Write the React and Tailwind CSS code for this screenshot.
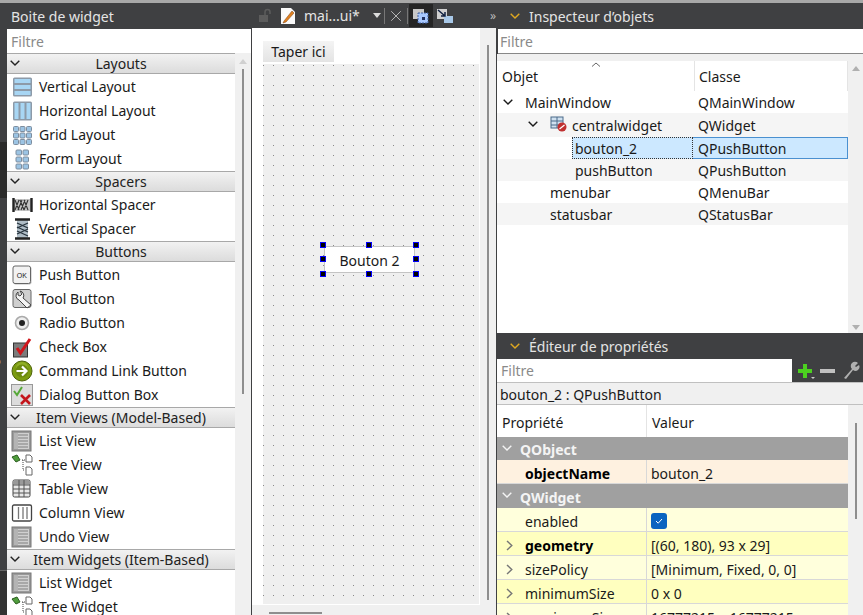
import { X } from 'lucide-react';

const Chevron = ({ className = 'text-[#2a2a2a]' }) => (
  <svg width="10" height="6" viewBox="0 0 10 6" className={className}>
    <path d="M0.7 0.7 L5 5 L9.3 0.7" fill="none" stroke="currentColor" strokeWidth="1.4" />
  </svg>
);

const ChevronSide = ({ className = '' }) => (
  <svg width="7" height="11" viewBox="0 0 7 11" className={className}>
    <path d="M1 1 L5.8 5.5 L1 10" fill="none" stroke="#777" strokeWidth="1.4" />
  </svg>
);

// small hand-drawn widget box icons
const Icon = ({ children }) => (
  <svg width="22" height="22" viewBox="0 0 22 22" className="shrink-0">{children}</svg>
);

const VLayout = () => (
  <Icon>
    <rect x="2" y="1.5" width="19" height="19" rx="1.5" fill="#8d9aa8" />
    {[3, 9, 15].map((y) => (
      <rect key={y} x="3.5" y={y} width="16" height="4" fill="#a8d6f4" />
    ))}
  </Icon>
);
const HLayout = () => (
  <Icon>
    <rect x="2" y="1.5" width="19" height="19" rx="1.5" fill="#8d9aa8" />
    {[3.5, 9.5, 15.5].map((x) => (
      <rect key={x} x={x} y="3" width="4" height="16" fill="#a8d6f4" />
    ))}
  </Icon>
);
const GridLayout = () => (
  <Icon>
    {[2.5, 9, 15.5].map((y) =>
      [2.5, 9, 15.5].map((x) => (
        <rect key={`${x}-${y}`} x={x} y={y} width="5" height="5" rx="1" fill="#9cc4e4" stroke="#7d8d9e" />
      ))
    )}
  </Icon>
);
const FormLayout = () => (
  <Icon>
    {[2, 9, 16].map((y) =>
      [5, 12].map((x) => (
        <rect key={`${x}-${y}`} x={x} y={y} width="5.5" height="5" rx="1" fill="#9cc4e4" stroke="#7d8d9e" />
      ))
    )}
  </Icon>
);
const HSpacer = () => (
  <Icon>
    <rect x="2" y="5" width="19" height="12" fill="#c4c4c4" />
    <path d="M4 16 L8 6 M7 16 L11 6 M10 16 L14 6 M13 16 L17 6 M4 6 L8 16 M9 6 L13 16 M13 6 L17 16" stroke="#333" strokeWidth="1.1" />
    <path d="M2.5 4 V18 M20.5 4 V18" stroke="#222" strokeWidth="2.4" />
  </Icon>
);
const VSpacer = () => (
  <Icon>
    <rect x="6" y="1" width="11" height="20" fill="#aebcc6" />
    <path d="M6 5 L17 10 M6 9 L17 14 M6 13 L17 18 M17 5 L6 10 M17 11 L6 16" stroke="#26323c" strokeWidth="1.3" />
    <path d="M4 1.5 H19 M4 20.5 H19" stroke="#222" strokeWidth="2.4" />
  </Icon>
);
const PushBtn = () => (
  <Icon>
    <rect x="2.5" y="2.5" width="18" height="18" rx="2" fill="#777" opacity="0.5" />
    <rect x="2" y="2" width="17.5" height="17.5" rx="2" fill="#f2f2f2" stroke="#666" />
    <text x="10.8" y="13.5" textAnchor="middle" fontSize="7" fontFamily="Liberation Sans" fill="#222">OK</text>
  </Icon>
);
const ToolBtn = () => (
  <Icon>
    <rect x="2" y="1.5" width="18" height="18" rx="2" fill="#cfcfcf" stroke="#666" />
    <path d="M7 4 a4.5 4.5 0 0 0 1 8 l8 8 l4 -3 l-8 -7 a4.5 4.5 0 0 0 -3 -7 l2 3 l-2 2 l-2 -1 z" fill="#f4f4f4" stroke="#444" />
  </Icon>
);
const RadioBtn = () => (
  <Icon>
    <circle cx="11" cy="11" r="6.5" fill="#eee" stroke="#aaa" strokeWidth="1.6" />
    <circle cx="11" cy="11" r="3" fill="#222" />
  </Icon>
);
const CheckBtn = () => (
  <Icon>
    <rect x="2.5" y="7" width="14" height="14" fill="#7c7c7c" stroke="#333" />
    <path d="M6 12 L9.5 17 L19 3" fill="none" stroke="#d0161c" strokeWidth="3" />
  </Icon>
);
const LinkBtn = () => (
  <Icon>
    <circle cx="11" cy="11" r="10" fill="#7c9c12" stroke="#4e6408" />
    <circle cx="11" cy="8" r="6" fill="#a6c23a" opacity="0.5" />
    <circle cx="11" cy="11" r="6.5" fill="#6d8a10" />
    <path d="M5.5 11 H15 M11 6.5 L15.5 11 L11 15.5" fill="none" stroke="#fff" strokeWidth="2.2" />
  </Icon>
);
const DialogBtn = () => (
  <Icon>
    <rect x="0.5" y="0.5" width="21" height="21" fill="#dcdcdc" stroke="#999" />
    <path d="M3 7 L6 11 L11 3" fill="none" stroke="#55a838" strokeWidth="2" />
    <path d="M10 11 L19 20 M19 11 L10 20" stroke="#c4161c" strokeWidth="2.6" />
  </Icon>
);
const ListIcon = () => (
  <Icon>
    <rect x="1" y="1" width="19" height="20" fill="#9a9a9a" stroke="#777" />
    <rect x="3" y="3" width="4" height="16" fill="#b4b4b4" />
    <rect x="7" y="3" width="11" height="16" fill="#d0d0d0" />
    {[5, 8, 11, 14, 17].map((y) => (
      <path key={y} d={`M7 ${y} H17`} stroke="#808080" />
    ))}
  </Icon>
);
const TreeIcon = () => (
  <Icon>
    <path d="M1 3 L6 1 L9 6 L5 8 Z" fill="#4f9d3c" stroke="#2c5e20" />
    <path d="M11 6 H14 M12 6 V16 H14" fill="none" stroke="#444" strokeDasharray="1 1" />
    <path d="M15 1 H19 L21 3 V8 H15 Z M15 13 H19 L21 15 V21 H15 Z" fill="#fff" stroke="#666" />
  </Icon>
);
const TableIcon = () => (
  <Icon>
    <rect x="2" y="2" width="17" height="17" rx="1.5" fill="#e8e8e8" stroke="#444" />
    <rect x="2.5" y="2.5" width="16" height="4" fill="#9a9a9a" />
    <path d="M2 7 H19 M2 11 H19 M2 15 H19 M8 2 V19 M13 2 V19" stroke="#555" />
  </Icon>
);
const ColumnIcon = () => (
  <Icon>
    <rect x="1.5" y="3" width="19" height="16" rx="1.5" fill="#fff" stroke="#444" strokeWidth="1.3" />
    <path d="M7.5 5 V17 M12 5 V17 M16 5 V17" stroke="#777" strokeWidth="1.3" />
  </Icon>
);

const sections = [
  { title: 'Layouts', items: [['Vertical Layout', VLayout], ['Horizontal Layout', HLayout], ['Grid Layout', GridLayout], ['Form Layout', FormLayout]] },
  { title: 'Spacers', items: [['Horizontal Spacer', HSpacer], ['Vertical Spacer', VSpacer]] },
  { title: 'Buttons', items: [['Push Button', PushBtn], ['Tool Button', ToolBtn], ['Radio Button', RadioBtn], ['Check Box', CheckBtn], ['Command Link Button', LinkBtn], ['Dialog Button Box', DialogBtn]] },
  { title: 'Item Views (Model-Based)', items: [['List View', ListIcon], ['Tree View', TreeIcon], ['Table View', TableIcon], ['Column View', ColumnIcon], ['Undo View', ListIcon]] },
  { title: 'Item Widgets (Item-Based)', items: [['List Widget', ListIcon], ['Tree Widget', TreeIcon]] },
];

const DockTitle = ({ title, height = 'h-[26px]' }) => (
  <div className={`flex ${height} shrink-0 items-center gap-[9px] pl-[13px] text-[#e4e4e4]`}>
    <Chevron className="text-[#e0a820]" />
    <span>{title}</span>
  </div>
);

const Scrollbar = () => (
  <div className="flex w-[16px] shrink-0 flex-col items-center bg-[#f0f0f0] pt-[6px]">
    <div className="h-0 w-0 border-x-[4px] border-b-[5px] border-x-transparent border-b-[#d0d0d0]" />
    <div className="mt-[5px] h-[325px] w-[2px] bg-[#8e8e8e]" />
  </div>
);

const LeftStrip = () => (
  <div className="flex w-[7px] shrink-0 flex-col overflow-hidden">
    <div className="h-[139px] shrink-0" />
    <div className="h-[56px] shrink-0 bg-[#2b2b2b]" />
    <div className="h-[154px] shrink-0" />
    <div className="-ml-[6px] h-[20px] shrink-0 text-[12px] text-[#b8b8b8]">6</div>
    <div className="h-[198px] shrink-0" />
    <div className="min-h-0 flex-1 border-t border-[#666] bg-[#333]" />
  </div>
);

const WidgetBox = () => (
  <div className="flex w-[252px] shrink-0">
    <LeftStrip />
    <div className="mr-px flex min-w-0 flex-1 flex-col">
      <div className="flex h-[26px] shrink-0 items-center pl-[4px] text-[#e4e4e4]">Boite de widget</div>
      <div className="flex h-[24px] shrink-0 items-center bg-white pl-[4px] text-[#8a8a8a]">Filtre</div>
      <div className="flex min-h-0 flex-1 bg-white">
        <div className="min-w-0 flex-1 overflow-hidden">
          {sections.map((s) => (
            <div key={s.title}>
              <div className="relative mb-px flex h-[21px] items-center justify-center border-y border-[#a8a8a8] bg-gradient-to-b from-[#f2f2f2] to-[#dcdcdc] text-[#222]">
                <Chevron className="absolute left-[3px] top-[6px]" />
                {s.title}
              </div>
              {s.items.map(([label, Ic]) => (
                <div key={label} className="flex h-[24px] items-center gap-[6px] pl-[4px] text-[#1a1a1a]">
                  <Ic />
                  <span className="pb-[2px]">{label}</span>
                </div>
              ))}
            </div>
          ))}
        </div>
        <Scrollbar />
      </div>
    </div>
  </div>
);

const Handle = ({ className }) => (
  <div className={`absolute h-[6px] w-[6px] border border-[#0000ff] bg-black ${className}`} />
);

const FormArea = () => (
  <div className="flex w-[245px] shrink-0 flex-col">
    <div className="flex h-[25px] shrink-0 items-center text-[#e4e4e4]">
      <svg width="16" height="16" viewBox="0 0 16 16" className="ml-[6px]">
        <rect x="1" y="7" width="9" height="7" fill="#5c5c5c" />
        <path d="M7 7 V4 a2.5 2.5 0 0 1 5 0 V6" fill="none" stroke="#5c5c5c" strokeWidth="1.5" />
      </svg>
      <svg width="18" height="20" viewBox="0 0 18 20" className="ml-[5px]">
        <path d="M2 2 H12 L16 6 V18 H2 Z" fill="#fafafa" />
        <path d="M5 15 L13 5 L15 7 L7 16 L4 17 Z" fill="#e08020" stroke="#7a4010" strokeWidth="0.5" />
      </svg>
      <span className="ml-[7px] w-[65px] whitespace-nowrap">mai...ui*</span>
      <div className="ml-[4px] h-0 w-0 border-x-[4px] border-t-[5px] border-x-transparent border-t-[#ddd]" />
      <div className="ml-[3px] h-[16px] w-px bg-[#777]" />
      <X size={18} strokeWidth={1.1} className="ml-[2px] text-[#cfcfcf]" />
      <div className="ml-[2px] h-[16px] w-px bg-[#777]" />
      <div className="ml-px flex h-[23px] w-[24px] items-center justify-center bg-[#252525]">
        <svg width="18" height="16" viewBox="0 0 18 16">
          <rect x="1" y="1" width="11" height="10" fill="#c8c8c8" />
          <rect x="6" y="5" width="10" height="10" fill="#a8c8ff" stroke="#4060a0" strokeDasharray="2 1" />
          <rect x="10" y="9" width="3" height="3" fill="#203060" />
        </svg>
      </div>
      <svg width="18" height="16" viewBox="0 0 18 16" className="ml-[3px]">
        <rect x="1" y="1" width="10" height="10" fill="#d0d0d0" />
        <rect x="8" y="8" width="9" height="7" fill="#a8c8e8" />
        <path d="M2 2 L9 8 M9 4 V8 H5" fill="none" stroke="#102040" strokeWidth="1.5" />
      </svg>
      <span className="ml-auto mr-[1px] text-[12px] text-[#bbb]">»</span>
    </div>
    <div className="mr-px flex min-h-0 flex-1">
      <div className="flex min-w-0 flex-1 flex-col bg-[#f0f0f0]">
        <div className="h-[577px] shrink-0 bg-white pl-[11px] pr-px">
          <div className="h-[13px]" />
          <div className="flex h-[21px] w-[71px] items-center justify-center bg-gradient-to-b from-[#f4f4f4] to-[#e4e4e4] text-[#1a1a1a]">
            Taper ici
          </div>
          <div className="relative mt-[2px] h-[540px] bg-[#efefef] bg-[radial-gradient(circle_at_0.5px_0.5px,#8a8a8a_0.6px,transparent_0.7px)] bg-[length:10px_10px] bg-[position:0_1px]">
            <button className="absolute left-[61px] top-[182px] h-[27px] w-[91px] border border-[#c4c4c4] bg-white pt-px text-[#1a1a1a]">
              Bouton 2
            </button>
            <Handle className="left-[57px] top-[178px]" />
            <Handle className="left-[103px] top-[178px]" />
            <Handle className="left-[150px] top-[178px]" />
            <Handle className="left-[57px] top-[192px]" />
            <Handle className="left-[150px] top-[192px]" />
            <Handle className="left-[57px] top-[207px]" />
            <Handle className="left-[103px] top-[207px]" />
            <Handle className="left-[150px] top-[207px]" />
          </div>
        </div>
        <div className="ml-[17px] mt-[7px] h-[2px] w-[53px] bg-[#8e8e8e]" />
      </div>
      <div className="flex w-[16px] shrink-0 flex-col items-center bg-[#f0f0f0] pt-[17px]">
        <div className="h-[555px] w-[2px] bg-[#8e8e8e]" />
      </div>
    </div>
  </div>
);

const treeRows = [
  { name: 'MainWindow', cls: 'QMainWindow', pad: 28, chev: 'left-[6px]' },
  { name: 'centralwidget', cls: 'QWidget', pad: 75, chev: 'left-[31px]', alt: true, icon: true, tall: true },
  { name: 'bouton_2', cls: 'QPushButton', pad: 78, selected: true },
  { name: 'pushButton', cls: 'QPushButton', pad: 78, alt: true },
  { name: 'menubar', cls: 'QMenuBar', pad: 53 },
  { name: 'statusbar', cls: 'QStatusBar', pad: 53, alt: true },
];

const ObjectInspector = () => (
  <div className="flex h-[330px] shrink-0 flex-col">
    <DockTitle title="Inspecteur d’objets" />
    <div className="ml-px flex h-[25px] shrink-0 items-center border-b border-[#888] bg-white pl-[2px] text-[#8a8a8a]">Filtre</div>
    <div className="flex min-h-0 flex-1 bg-[#f0f0f0]">
      <div className="mt-[7px] min-w-0 flex-1 bg-white">
        <div className="relative flex h-[30px] text-[#1a1a1a]">
          <svg width="10" height="5" viewBox="0 0 10 5" className="absolute left-[94px] top-[1px]">
            <path d="M1 4.5 L5 1 L9 4.5" fill="none" stroke="#666" />
          </svg>
          <div className="flex w-[198px] items-end border-r border-[#e4e4e4] pl-[5px] pb-[4px]">Objet</div>
          <div className="flex flex-1 items-end border-r border-[#e4e4e4] pl-[4px] pb-[4px]">Classe</div>
        </div>
        {treeRows.map((r) => (
          <div
            key={r.name}
            className={`relative flex items-center text-[#1a1a1a] ${r.tall ? 'h-[24px]' : 'h-[22px]'} ${r.alt ? 'bg-[#f5f5f5]' : ''}`}
          >
            {r.chev && <Chevron className={`absolute top-[8px] ${r.chev}`} />}
            {r.icon && (
              <svg width="18" height="17" viewBox="0 0 18 17" className="absolute left-[53px] top-[3px]">
                <rect x="1" y="1" width="12" height="11" fill="#cfe0ef" stroke="#4a6a8a" />
                <path d="M1 5 H13 M1 9 H13 M7 1 V12" stroke="#4a6a8a" />
                <circle cx="12" cy="11" r="4.5" fill="#c03030" />
                <path d="M9.5 13 L14.5 9" stroke="#fff" strokeWidth="1.2" />
              </svg>
            )}
            <div className="flex h-full w-[196px] items-center" style={{ paddingLeft: r.selected ? 75 : r.pad }}>
              {r.selected ? (
                <div className="flex h-full flex-1 items-center border border-dotted border-[#333] bg-[#cce8ff] pl-[2px]">{r.name}</div>
              ) : (
                r.name
              )}
            </div>
            <div className={`flex h-full flex-1 items-center pl-[5px] ${r.selected ? 'border-y border-r border-[#4a90d0] bg-[#cce8ff]' : ''}`}>{r.cls}</div>
          </div>
        ))}
      </div>
      <div className="flex w-[15px] shrink-0 flex-col items-center justify-between pt-[12px] pb-[3px]">
        <div className="h-0 w-0 border-x-[4px] border-b-[5px] border-x-transparent border-b-[#b0b0b0]" />
        <div className="h-0 w-0 border-x-[4px] border-t-[5px] border-x-transparent border-t-[#b0b0b0]" />
      </div>
    </div>
  </div>
);

const propRows = [
  { section: 'QObject', h: 'h-[23px]' },
  { name: 'objectName', value: 'bouton_2', bold: true, bg: 'bg-[#fef1e0]' },
  { section: 'QWidget', h: 'h-[24px]' },
  { name: 'enabled', check: true, bg: 'bg-[#ffffdc]' },
  { name: 'geometry', value: '[(60, 180), 93 x 29]', bold: true, arrow: true, bg: 'bg-[#ffffbf]' },
  { name: 'sizePolicy', value: '[Minimum, Fixed, 0, 0]', arrow: true, bg: 'bg-[#ffffdc]' },
  { name: 'minimumSize', value: '0 x 0', arrow: true, bg: 'bg-[#ffffbf]' },
  { name: 'maximumSize', value: '16777215 x 16777215', arrow: true, bg: 'bg-[#ffffdc]' },
];

const PropertyEditor = () => (
  <div className="flex min-h-0 flex-1 flex-col">
    <DockTitle title="Éditeur de propriétés" />
    <div className="flex h-[23px] shrink-0 items-center">
      <div className="flex h-full w-[295px] items-center bg-white pl-[4px] text-[#8a8a8a]">Filtre</div>
      <svg width="20" height="20" viewBox="0 0 20 20" className="ml-[4px]">
        <path d="M7 3 H11 V8 H16 V12 H11 V17 H7 V12 H2 V8 H7 Z" fill="#4cd020" />
        <path d="M15 16 H19 L17 18 Z" fill="#ccc" />
      </svg>
      <div className="ml-[4px] h-[4px] w-[15px] bg-[#c0c0c0]" />
      <svg width="19" height="19" viewBox="0 0 19 19" className="ml-[7px]">
        <path d="M2 17 L10 8 a4 4 0 0 1 6 -6 l-3 3 l1 1 l3 -2 a4 4 0 0 1 -6 5 L4 18 Z" fill="#b0b0b0" />
      </svg>
    </div>
    <div className="flex h-[23px] shrink-0 items-center border-y border-[#c0c0c0] bg-[#f0f0f0] pl-[3px] pt-[2px] text-[#1a1a1a]">bouton_2 : QPushButton</div>
    <div className="flex min-h-0 flex-1 overflow-hidden bg-white">
      <div className="min-w-0 flex-1">
        <div className="flex h-[32px] items-center text-[#1a1a1a]">
          <div className="flex h-full w-[150px] items-center border-r border-[#e4e4e4] pl-[5px] pt-[2px]">Propriété</div>
          <div className="pl-[5px] pt-[2px]">Valeur</div>
        </div>
        {propRows.map((r) =>
          r.section ? (
            <div key={r.section} className={`relative flex ${r.h} items-center bg-[#a0a0a0] pl-[23px] pt-[2px] font-bold text-[#f4f4f4]`}>
              <Chevron className="absolute left-[5px] top-[8px]" />
              {r.section}
            </div>
          ) : (
            <div key={r.name} className={`relative flex h-[24px] items-center border-b border-[#d8d8d8] text-[#1a1a1a] ${r.bg}`}>
              {r.arrow && <ChevronSide className="absolute left-[9px] top-[8px]" />}
              <div className={`flex h-full w-[150px] items-center border-r border-[#d8d8d8] pl-[28px] pt-[3px] ${r.bold ? 'font-bold text-black' : ''}`}>{r.name}</div>
              <div className="pl-[4px] pt-[3px]">
                {r.check ? (
                  <div className="flex h-[16px] w-[16px] items-center justify-center rounded-[3px] bg-[#0a64c0]">
                    <svg width="10" height="10" viewBox="0 0 10 10"><path d="M2 5 L4.2 7.2 L8 3" fill="none" stroke="#fff" /></svg>
                  </div>
                ) : r.value}
              </div>
            </div>
          )
        )}
      </div>
      <div className="flex w-[15px] shrink-0 flex-col items-center bg-[#f0f0f0] pt-[18px]">
        <div className="h-[96px] w-[2px] bg-[#8e8e8e]" />
      </div>
    </div>
  </div>
);

export default function App() {
  return (
    <div className="flex h-[615px] w-[863px] flex-col overflow-hidden bg-[#3f4042] font-['Noto_Sans',sans-serif] text-[14px]">
      <div className="h-[3px] shrink-0 bg-[#a8a8a8]" />
      <div className="flex min-h-0 flex-1">
        <WidgetBox />
        <FormArea />
        <div className="flex min-w-0 flex-1 flex-col">
          <ObjectInspector />
          <PropertyEditor />
        </div>
      </div>
    </div>
  );
}
